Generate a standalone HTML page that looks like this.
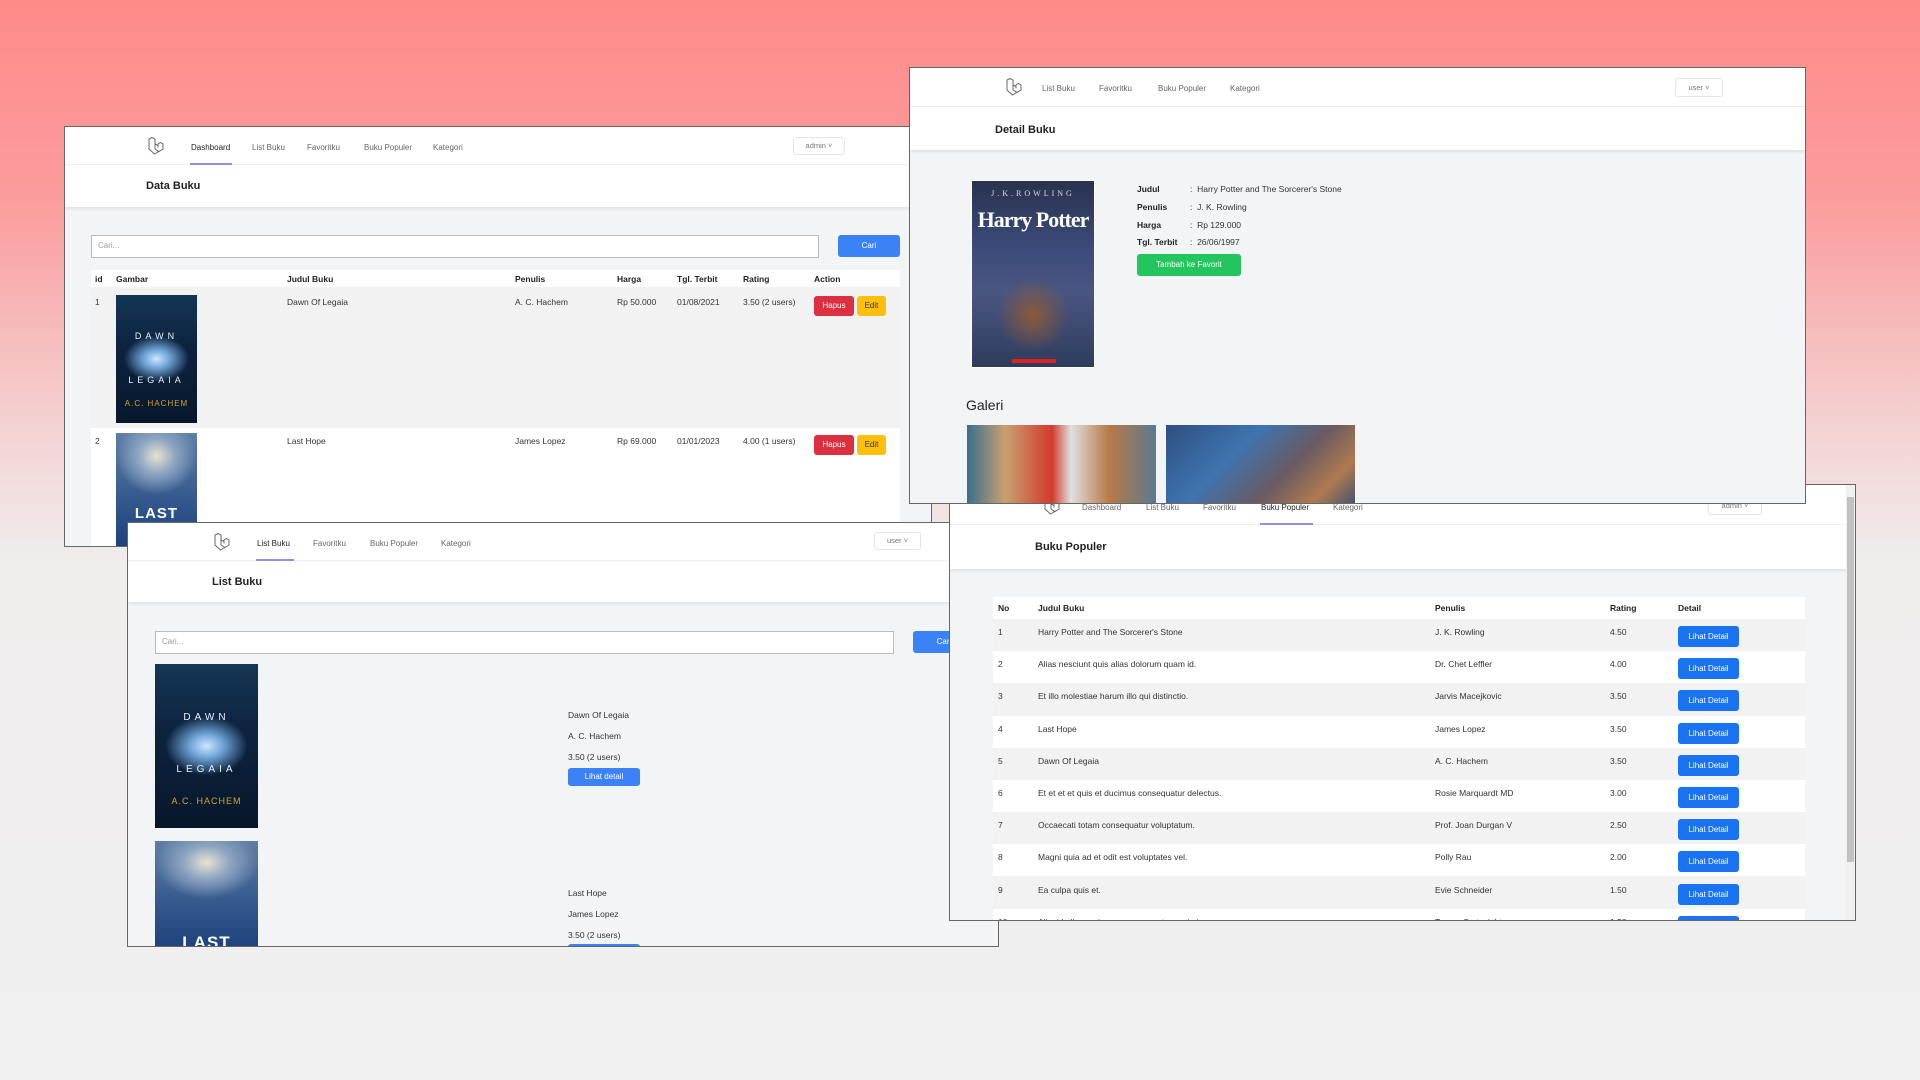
<!DOCTYPE html>
<html><head><meta charset="utf-8">
<style>
*{box-sizing:border-box;margin:0;padding:0}
html,body{width:1920px;height:1080px;overflow:hidden}
body{font-family:"Liberation Sans",sans-serif;background:linear-gradient(180deg,#ff8a8a 0px,#fb9c9c 200px,#f4d0d0 420px,#f0eded 560px,#f0f0f0 1080px);position:relative;color:#222}
.win{position:absolute;background:#f3f4f6;border:1px solid #666;overflow:hidden}
.abs{position:absolute}
.nav{position:absolute;left:0;top:0;right:0;background:#fff;border-bottom:1px solid #eee}
.ni{position:absolute;font-size:8px;color:#666;white-space:nowrap}
.ni.act{color:#222}
.ul{position:absolute;height:2px;background:#8a93e8}
.hdr{position:absolute;left:0;right:0;background:#fff;box-shadow:0 2px 3px rgba(0,0,0,.08)}
.ht{position:absolute;font-size:11px;font-weight:bold;color:#222}
.dd{position:absolute;border:1px solid #e5e5e5;border-radius:3px;background:#fff;font-size:7.5px;color:#777;text-align:center}
.inp{position:absolute;background:#fff;border:1px solid #bbb;font-size:8px;color:#999;padding:5px 6px}
.btn{position:absolute;color:#fff;font-size:8px;text-align:center;border-radius:3px}
.t{position:absolute;font-size:8.5px;color:#333;white-space:nowrap}
.th{position:absolute;font-size:8.5px;color:#222;font-weight:bold;white-space:nowrap}
.dawn{background:radial-gradient(ellipse 40% 18% at 50% 50%,#cfe6ff 0,#6fa4d8 40%,rgba(20,50,90,0) 100%),linear-gradient(180deg,#143655 0,#0d2440 40%,#07172a 100%)}
.last{background:radial-gradient(ellipse 50% 30% at 50% 18%,#e8e2cf 0,#8fa6c2 45%,rgba(40,70,120,0) 100%),linear-gradient(180deg,#5f7ea6 0,#32578c 55%,#173c78 100%)}
.ct{position:absolute;left:0;right:0;text-align:center;color:#e8eef8;font-size:9px;letter-spacing:4px}
</style></head><body>

<div class="win" style="left:64px;top:126px;width:868px;height:421px">
  <div class="nav" style="height:38px">
    <svg class="abs" style="left:83px;top:10px" width="16" height="18" viewBox="0 0 16 18" fill="none" stroke="#666" stroke-width="1"><path d="M1 2l3-1.5 3 1.5v10l4 2.5 4-2.5V7l-2.5-1.5L10 7v3.5M1 2v10l5.5 5 5-3M7 2v5l3 1.5"/></svg>
    <div class="ni act" style="left:126px;top:16px">Dashboard</div>
    <div class="ul" style="left:125px;top:36px;width:42px"></div>
    <div class="ni" style="left:187px;top:16px">List Buku</div>
    <div class="ni" style="left:242px;top:16px">Favoritku</div>
    <div class="ni" style="left:299px;top:16px">Buku Populer</div>
    <div class="ni" style="left:368px;top:16px">Kategori</div>
    <div class="dd" style="left:728px;top:10px;width:52px;height:18px;line-height:16px">admin ˅</div>
  </div>
  <div class="hdr" style="top:38px;height:42px"><div class="ht" style="left:81px;top:15px">Data Buku</div></div>
  <div class="inp" style="left:26px;top:108px;width:728px;height:23px">Cari...</div>
  <div class="btn" style="left:773px;top:108px;width:62px;height:22px;line-height:22px;background:#3b82f6">Cari</div>
  <div class="abs" style="left:26px;top:143px;width:809px;height:17px;background:#fff"></div>
  <div class="abs" style="left:26px;top:160px;width:809px;height:141px;background:#f2f2f2"></div>
  <div class="abs" style="left:26px;top:301px;width:809px;height:130px;background:#fff"></div>
  <div class="th" style="left:30px;top:147px">id</div>
  <div class="th" style="left:51px;top:147px">Gambar</div>
  <div class="th" style="left:222px;top:147px">Judul Buku</div>
  <div class="th" style="left:450px;top:147px">Penulis</div>
  <div class="th" style="left:552px;top:147px">Harga</div>
  <div class="th" style="left:612px;top:147px">Tgl. Terbit</div>
  <div class="th" style="left:678px;top:147px">Rating</div>
  <div class="th" style="left:749px;top:147px">Action</div>
  <div class="abs dawn" style="left:51px;top:168px;width:81px;height:128px"><div class="ct" style="top:36px">DAWN</div><div class="ct" style="top:80px">LEGAIA</div><div class="ct" style="top:104px;color:#d4a62a;font-size:8px;letter-spacing:1px">A.C. HACHEM</div></div>
  <div class="t" style="left:30px;top:170px">1</div>
  <div class="t" style="left:222px;top:170px">Dawn Of Legaia</div>
  <div class="t" style="left:450px;top:170px">A. C. Hachem</div>
  <div class="t" style="left:552px;top:170px">Rp 50.000</div>
  <div class="t" style="left:612px;top:170px">01/08/2021</div>
  <div class="t" style="left:678px;top:170px">3.50 (2 users)</div>
  <div class="btn" style="left:749px;top:169px;width:40px;height:20px;line-height:20px;background:#dc2f3f">Hapus</div>
  <div class="btn" style="left:792px;top:169px;width:29px;height:20px;line-height:20px;background:#fbbf0c;color:#333">Edit</div>
  <div class="abs last" style="left:51px;top:306px;width:81px;height:128px"><div class="ct" style="top:72px;font-size:15px;letter-spacing:1px;color:#fff;font-weight:bold">LAST</div></div>
  <div class="t" style="left:30px;top:309px">2</div>
  <div class="t" style="left:222px;top:309px">Last Hope</div>
  <div class="t" style="left:450px;top:309px">James Lopez</div>
  <div class="t" style="left:552px;top:309px">Rp 69.000</div>
  <div class="t" style="left:612px;top:309px">01/01/2023</div>
  <div class="t" style="left:678px;top:309px">4.00 (1 users)</div>
  <div class="btn" style="left:749px;top:308px;width:40px;height:20px;line-height:20px;background:#dc2f3f">Hapus</div>
  <div class="btn" style="left:792px;top:308px;width:29px;height:20px;line-height:20px;background:#fbbf0c;color:#333">Edit</div>
</div>

<div class="win" style="left:127px;top:522px;width:872px;height:425px">
  <div class="nav" style="height:38px">
    <svg class="abs" style="left:86px;top:10px" width="16" height="18" viewBox="0 0 16 18" fill="none" stroke="#666" stroke-width="1"><path d="M1 2l3-1.5 3 1.5v10l4 2.5 4-2.5V7l-2.5-1.5L10 7v3.5M1 2v10l5.5 5 5-3M7 2v5l3 1.5"/></svg>
    <div class="ni act" style="left:129px;top:16px">List Buku</div>
    <div class="ul" style="left:128px;top:36px;width:38px"></div>
    <div class="ni" style="left:185px;top:16px">Favoritku</div>
    <div class="ni" style="left:242px;top:16px">Buku Populer</div>
    <div class="ni" style="left:313px;top:16px">Kategori</div>
    <div class="dd" style="left:746px;top:9px;width:47px;height:18px;line-height:16px">user ˅</div>
  </div>
  <div class="hdr" style="top:38px;height:41px"><div class="ht" style="left:84px;top:15px">List Buku</div></div>
  <div class="inp" style="left:27px;top:108px;width:739px;height:23px">Cari...</div>
  <div class="btn" style="left:785px;top:108px;width:62px;height:22px;line-height:22px;background:#3b82f6">Cari</div>
  <div class="abs dawn" style="left:27px;top:141px;width:103px;height:164px"><div class="ct" style="top:48px;font-size:10px">DAWN</div><div class="ct" style="top:100px;font-size:10px">LEGAIA</div><div class="ct" style="top:132px;color:#d4a62a;font-size:9px;letter-spacing:1px">A.C. HACHEM</div></div>
  <div class="t" style="left:440px;top:187px">Dawn Of Legaia</div>
  <div class="t" style="left:440px;top:208px">A. C. Hachem</div>
  <div class="t" style="left:440px;top:229px">3.50 (2 users)</div>
  <div class="btn" style="left:440px;top:245px;width:72px;height:18px;line-height:18px;background:#3b82f6">Lihat detail</div>
  <div class="abs last" style="left:27px;top:318px;width:103px;height:120px"><div class="ct" style="top:92px;font-size:17px;letter-spacing:1px;color:#fff;font-weight:bold">LAST</div></div>
  <div class="t" style="left:440px;top:365px">Last Hope</div>
  <div class="t" style="left:440px;top:386px">James Lopez</div>
  <div class="t" style="left:440px;top:407px">3.50 (2 users)</div>
  <div class="btn" style="left:440px;top:421px;width:72px;height:18px;background:#3b82f6"></div>
</div>

<div class="win" style="left:949px;top:484px;width:907px;height:437px">
  <div class="nav" style="height:40px">
    <svg class="abs" style="left:94px;top:12px" width="16" height="18" viewBox="0 0 16 18" fill="none" stroke="#666" stroke-width="1"><path d="M1 2l3-1.5 3 1.5v10l4 2.5 4-2.5V7l-2.5-1.5L10 7v3.5M1 2v10l5.5 5 5-3M7 2v5l3 1.5"/></svg>
    <div class="ni" style="left:132px;top:18px">Dashboard</div>
    <div class="ni" style="left:196px;top:18px">List Buku</div>
    <div class="ni" style="left:253px;top:18px">Favoritku</div>
    <div class="ni act" style="left:311px;top:18px">Buku Populer</div>
    <div class="ul" style="left:310px;top:38px;width:53px"></div>
    <div class="ni" style="left:383px;top:18px">Kategori</div>
    <div class="dd" style="left:758px;top:12px;width:54px;height:18px;line-height:16px">admin ˅</div>
  </div>
  <div class="hdr" style="top:40px;height:44px"><div class="ht" style="left:85px;top:16px">Buku Populer</div></div>
  <div class="abs" style="right:0;top:0;width:9px;height:437px;background:#f0f0f0"></div>
  <div class="abs" style="right:1px;top:12px;width:7px;height:365px;background:#c1c1c1"></div>
  <div class="abs" style="left:43px;top:112px;width:812px;height:22px;background:#fff"></div>
  <div class="th" style="left:48px;top:118px">No</div>
  <div class="th" style="left:88px;top:118px">Judul Buku</div>
  <div class="th" style="left:485px;top:118px">Penulis</div>
  <div class="th" style="left:660px;top:118px">Rating</div>
  <div class="th" style="left:728px;top:118px">Detail</div>
  <div id="rows"></div>
</div>

<div class="win" style="left:909px;top:67px;width:897px;height:437px">
  <div class="nav" style="height:39px">
    <svg class="abs" style="left:96px;top:10px" width="16" height="18" viewBox="0 0 16 18" fill="none" stroke="#666" stroke-width="1"><path d="M1 2l3-1.5 3 1.5v10l4 2.5 4-2.5V7l-2.5-1.5L10 7v3.5M1 2v10l5.5 5 5-3M7 2v5l3 1.5"/></svg>
    <div class="ni" style="left:132px;top:16px">List Buku</div>
    <div class="ni" style="left:189px;top:16px">Favoritku</div>
    <div class="ni" style="left:248px;top:16px">Buku Populer</div>
    <div class="ni" style="left:320px;top:16px">Kategori</div>
    <div class="dd" style="left:765px;top:10px;width:48px;height:19px;line-height:17px">user ˅</div>
  </div>
  <div class="hdr" style="top:39px;height:43px"><div class="ht" style="left:85px;top:17px">Detail Buku</div></div>
  <div class="abs" style="left:61px;top:112px;width:124px;height:188px;background:radial-gradient(ellipse 30% 20% at 50% 72%,#8a5a3a 0,rgba(80,60,60,0) 100%),linear-gradient(180deg,#2a3250 0,#3b4a78 35%,#4a5682 60%,#2e3c5c 100%);border:1px solid #fff">
    <div class="abs" style="left:0;right:0;top:26px;text-align:center;color:#fff;font-family:'Liberation Serif',serif;font-size:22px;font-weight:bold;letter-spacing:-1px">Harry Potter</div>
    <div class="abs" style="left:0;right:0;top:8px;text-align:center;color:#ddd;font-family:'Liberation Serif',serif;font-size:8px;letter-spacing:3px">J.K.ROWLING</div>
    <div class="abs" style="left:40px;top:178px;width:44px;height:4px;background:#d22"></div>
  </div>
  <div class="th" style="left:227px;top:116px">Judul</div><div class="t" style="left:280px;top:116px">: &nbsp;Harry Potter and The Sorcerer's Stone</div>
  <div class="th" style="left:227px;top:134px">Penulis</div><div class="t" style="left:280px;top:134px">: &nbsp;J. K. Rowling</div>
  <div class="th" style="left:227px;top:152px">Harga</div><div class="t" style="left:280px;top:152px">: &nbsp;Rp 129.000</div>
  <div class="th" style="left:227px;top:169px">Tgl. Terbit</div><div class="t" style="left:280px;top:169px">: &nbsp;26/06/1997</div>
  <div class="btn" style="left:227px;top:186px;width:104px;height:22px;line-height:22px;background:#22c55e">Tambah ke Favorit</div>
  <div class="abs" style="left:56px;top:329px;font-size:14px;color:#222">Galeri</div>
  <div class="abs" style="left:57px;top:357px;width:189px;height:90px;background:linear-gradient(90deg,#3a6f8c 0,#c8a070 20%,#d23a2e 45%,#e0e0e0 55%,#b87a48 75%,#5a7a90 100%)"></div>
  <div class="abs" style="left:256px;top:357px;width:189px;height:90px;background:linear-gradient(135deg,#2f4f80 0,#3f74b0 35%,#6a5a60 60%,#b07a50 80%,#2b4a70 100%)"></div>
</div>

<script>
var d=[["1","Harry Potter and The Sorcerer's Stone","J. K. Rowling","4.50"],["2","Alias nesciunt quis alias dolorum quam id.","Dr. Chet Leffler","4.00"],["3","Et illo molestiae harum illo qui distinctio.","Jarvis Macejkovic","3.50"],["4","Last Hope","James Lopez","3.50"],["5","Dawn Of Legaia","A. C. Hachem","3.50"],["6","Et et et et quis et ducimus consequatur delectus.","Rosie Marquardt MD","3.00"],["7","Occaecati totam consequatur voluptatum.","Prof. Joan Durgan V","2.50"],["8","Magni quia ad et odit est voluptates vel.","Polly Rau","2.00"],["9","Ea culpa quis et.","Evie Schneider","1.50"],["10","Aliquid ullam quisquam rerum autem animi.","Tyrese Cartwright","1.50"]];
var h="";
for(var i=0;i<d.length;i++){var y=134+i*32.2;
h+='<div class="abs" style="left:43px;top:'+y+'px;width:812px;height:32px;background:'+(i%2?'#fff':'#f2f2f2')+'"></div>';
h+='<div class="t" style="left:48px;top:'+(y+8)+'px">'+d[i][0]+'</div><div class="t" style="left:88px;top:'+(y+8)+'px">'+d[i][1]+'</div><div class="t" style="left:485px;top:'+(y+8)+'px">'+d[i][2]+'</div><div class="t" style="left:660px;top:'+(y+8)+'px">'+d[i][3]+'</div>';
h+='<div class="btn" style="left:728px;top:'+(y+7)+'px;width:61px;height:21px;line-height:21px;background:#1a73f0">Lihat Detail</div>';}
document.getElementById("rows").outerHTML=h;
</script>
</body></html>
